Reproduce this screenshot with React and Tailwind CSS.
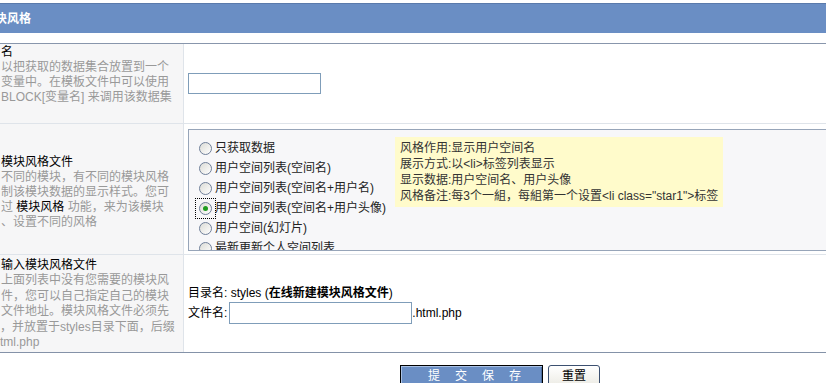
import React from 'react'

const radios = [
  { label: '只获取数据' },
  { label: '用户空间列表(空间名)' },
  { label: '用户空间列表(空间名+用户名)' },
  { label: '用户空间列表(空间名+用户头像)', checked: true },
  { label: '用户空间(幻灯片)' },
  { label: '最新更新个人空间列表' },
]

function Radio({ checked }) {
  return (
    <span className="relative flex h-[13px] w-[13px] shrink-0 items-center justify-center rounded-full border border-[#6f7f99] bg-gradient-to-br from-[#dcdcd6] to-white">
      {checked && <span className="h-[5px] w-[5px] rounded-full bg-[#1f9b1f]"></span>}
      {checked && <span className="absolute -inset-[5px] border border-dotted border-black"></span>}
    </span>
  )
}

export default function App() {
  return (
    <div className="h-[383px] w-[826px] overflow-hidden bg-white text-[12px] text-black font-['Liberation_Sans','Noto_Sans_CJK_SC',sans-serif]">
      {/* title bar */}
      <div className="pt-[3px]">
        <div className="flex h-[30px] items-center border-t border-[#5a7aab] bg-[#6a8ec4] font-bold text-white">
          <span className="-ml-[5px] leading-[16px]">块风格</span>
        </div>
      </div>

      {/* form table */}
      <div className="mt-[10px] border-t border-[#8896ac]">
        {/* row 1 */}
        <div className="grid h-[80px] grid-cols-[184px_1fr] border-b border-[#dfe4ea]">
          <div className="border-r border-[#dfe4ea] bg-[#f6f6f7] pl-[1px] pt-[1px] leading-[15px] whitespace-nowrap">
            <div>名</div>
            <div className="text-[#999]">以把获取的数据集合放置到一个</div>
            <div className="text-[#999]">变量中。在模板文件中可以使用</div>
            <div className="text-[#999]">BLOCK[变量名] 来调用该数据集</div>
          </div>
          <div className="flex items-center pl-[4px]">
            <input type="text" className="h-[21px] w-[133px] border border-[#7f9db9] bg-white outline-none" />
          </div>
        </div>

        {/* row 2 */}
        <div className="grid h-[131px] grid-cols-[184px_1fr] border-b border-[#dfe4ea]">
          <div className="border-r border-[#dfe4ea] bg-[#f6f6f7] pl-[1px] pt-[31px] leading-[15px] whitespace-nowrap">
            <div>模块风格文件</div>
            <div className="text-[#999]">不同的模块，有不同的模块风格</div>
            <div className="text-[#999]">制该模块数据的显示样式。您可</div>
            <div className="text-[#999]">过 <span className="text-black">模块风格</span> 功能，来为该模块</div>
            <div className="text-[#999]">、设置不同的风格</div>
          </div>
          <div className="flex pl-[4px] pt-[5px] pb-[3px]">
            <div className="flex h-[122px] flex-1 overflow-hidden border-y border-l border-[#97a5b9] bg-[#f7f7f9]">
              <div className="w-[206px] shrink-0 pl-[10px] pt-[8px]">
                {radios.map((r) => (
                  <div key={r.label} className="flex h-[20px] items-center gap-[3px] whitespace-nowrap text-[#222]">
                    <Radio checked={r.checked} />
                    <span className="leading-[16px]">{r.label}</span>
                  </div>
                ))}
              </div>
              <div className="mt-[7px] self-start whitespace-nowrap bg-[#fffbcb] px-[5px] py-[3px] leading-[16px] text-[#333]">
                <div>风格作用:显示用户空间名</div>
                <div>展示方式:以&lt;li&gt;标签列表显示</div>
                <div>显示数据:用户空间名、用户头像</div>
                <div>风格备注:每3个一組，每組第一个设置&lt;li class="star1"&gt;标签</div>
              </div>
            </div>
          </div>
        </div>

        {/* row 3 */}
        <div className="grid h-[98px] grid-cols-[184px_1fr] border-b border-[#8492a8]">
          <div className="border-r border-[#dfe4ea] bg-[#f6f6f7] pt-[3px] leading-[15.4px] whitespace-nowrap">
            <div className="pl-[1px]">输入模块风格文件</div>
            <div className="pl-[1px] text-[#999]">上面列表中没有您需要的模块风</div>
            <div className="pl-[1px] text-[#999]">件，您可以自己指定自己的模块</div>
            <div className="pl-[1px] text-[#999]">文件地址。模块风格文件必须先</div>
            <div className="text-[#999]">，并放置于styles目录下面，后缀</div>
            <div className="text-[#999]">tml.php</div>
          </div>
          <div className="flex flex-col justify-center pl-[4px] pt-[2px]">
            <div className="leading-[16px] whitespace-nowrap">
              目录名: styles (<span className="font-bold">在线新建模块风格文件</span>)
            </div>
            <div className="mt-[1px] flex items-center whitespace-nowrap">
              <span>文件名:</span>
              <input type="text" className="ml-[2px] h-[22px] w-[183px] border border-[#7f9db9] bg-white outline-none" />
              <span>.html.php</span>
            </div>
          </div>
        </div>
      </div>

      {/* buttons */}
      <div className="mt-[12px] flex gap-[5px] pl-[400px]">
        <button className="h-[22px] w-[143px] border border-black bg-[#6a8ec4] pl-[27px] text-left tracking-[15px] text-white shadow-[inset_1px_1px_0_#a9c1e4,inset_-1px_-1px_0_#4d6e9e]">
          提交保存
        </button>
        <button className="h-[22px] w-[52px] rounded-[3px] border border-[#3c5070] bg-gradient-to-b from-white to-[#ecebe4] text-black">
          重置
        </button>
      </div>
    </div>
  )
}
